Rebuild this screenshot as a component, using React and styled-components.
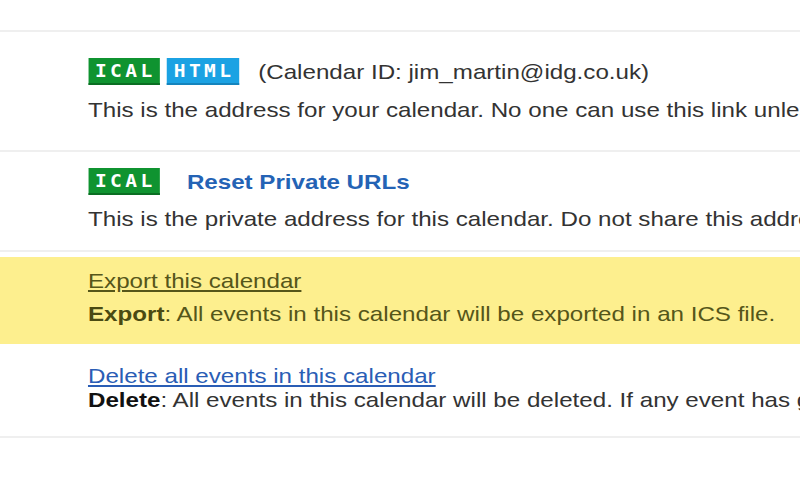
import React from "react";
import styled, { createGlobalStyle } from "styled-components";

// the reference is a screenshot stretched sideways, so the sheet is
// laid out narrow and widened with scaleX
const STRETCH = 1.15;

const GlobalStyle = createGlobalStyle`
  body {
    margin: 0;
    background: #fff;
    font-family: "Liberation Sans", Arial, sans-serif;
    overflow: hidden;
  }
`;

const Page = styled.div`
  width: 800px;
  height: 500px;
  padding-top: 30px;
  box-sizing: border-box;
  overflow: hidden;
`;

const Sheet = styled.div`
  width: ${800 / STRETCH}px;
  transform: scaleX(${STRETCH});
  transform-origin: 0 0;
  white-space: nowrap;
`;

const Row = styled.div`
  border-top: 2px solid #efefef;
  padding: ${(p) => p.$pad || "0"};
  &:last-child {
    border-bottom: 2px solid #efefef;
  }
`;

const Body = styled.div`
  padding: ${(p) => p.$pad || "0"};
  padding-left: 76.5px;
`;

const Highlight = styled.div`
  background: #fdef8e;
  margin-top: 5px;
  padding: 12px 0 18px 76.5px;
  color: #55561a;
`;

const BadgeLine = styled.div`
  display: flex;
  align-items: center;
  gap: 6px;
  height: 27px;
  margin-bottom: ${(p) => p.$gap ?? 13}px;
`;

const Badge = styled.span`
  display: inline-flex;
  align-items: center;
  justify-content: center;
  box-sizing: border-box;
  width: ${(p) => p.$w || 62}px;
  height: 27px;
  background: ${(p) => (p.$kind === "html" ? "#1ba2e3" : "#0f9330")};
  border-bottom: 2px solid ${(p) => (p.$kind === "html" ? "#1484bd" : "#0a6e22")};
  color: #fff;
  font-family: "DejaVu Sans Mono", monospace;
  font-weight: bold;
  font-size: 17px;
  letter-spacing: 3px;
  padding-left: 3px;
`;

const Note = styled.span`
  font-size: 21px;
  color: #333;
  margin-left: 11px;
`;

const ResetLink = styled.a`
  font-size: 21px;
  font-weight: bold;
  color: #2463b5;
  margin-left: 18px;
  text-decoration: none;
`;

const Text = styled.div`
  font-size: 21px;
  line-height: 24px;
  color: ${(p) => p.$color || "#333"};
`;

const Link = styled.a`
  display: inline-block;
  font-size: 21px;
  line-height: 24px;
  color: ${(p) => p.$color || "#2a5db5"};
  text-decoration: underline;
  margin-bottom: ${(p) => p.$gap || 0}px;
`;

const Strong = styled.b`
  color: ${(p) => p.$color || "#111"};
`;

export default function App() {
  return (
    <>
      <GlobalStyle />
      <Page>
        <Sheet>
          <Row $pad="26px 0 28px">
            <Body>
              <BadgeLine>
                <Badge>ICAL</Badge>
                <Badge $kind="html" $w={63}>HTML</Badge>
                <Note>(Calendar ID: jim_martin@idg.co.uk)</Note>
              </BadgeLine>
              <Text>
                This is the address for your calendar. No one can use this link unless you have made your calendar public.
              </Text>
            </Body>
          </Row>
          <Row $pad="16px 0 19px">
            <Body>
              <BadgeLine $gap={12}>
                <Badge>ICAL</Badge>
                <ResetLink href="#">Reset Private URLs</ResetLink>
              </BadgeLine>
              <Text>
                This is the private address for this calendar. Do not share this address with others.
              </Text>
            </Body>
          </Row>
          <Row>
            <Highlight>
              <Link href="#" $color="#55561a" $gap={9}>
                Export this calendar
              </Link>
              <Text $color="#55561a">
                <Strong $color="#4a4a12">Export</Strong>: All events in this calendar will be exported in an ICS file.
              </Text>
            </Highlight>
            <Body $pad="20px 0 24px">
              <Link href="#">Delete all events in this calendar</Link>
              <Text>
                <Strong>Delete</Strong>: All events in this calendar will be deleted. If any event has guests, they will be notified.
              </Text>
            </Body>
          </Row>
        </Sheet>
      </Page>
    </>
  );
}
